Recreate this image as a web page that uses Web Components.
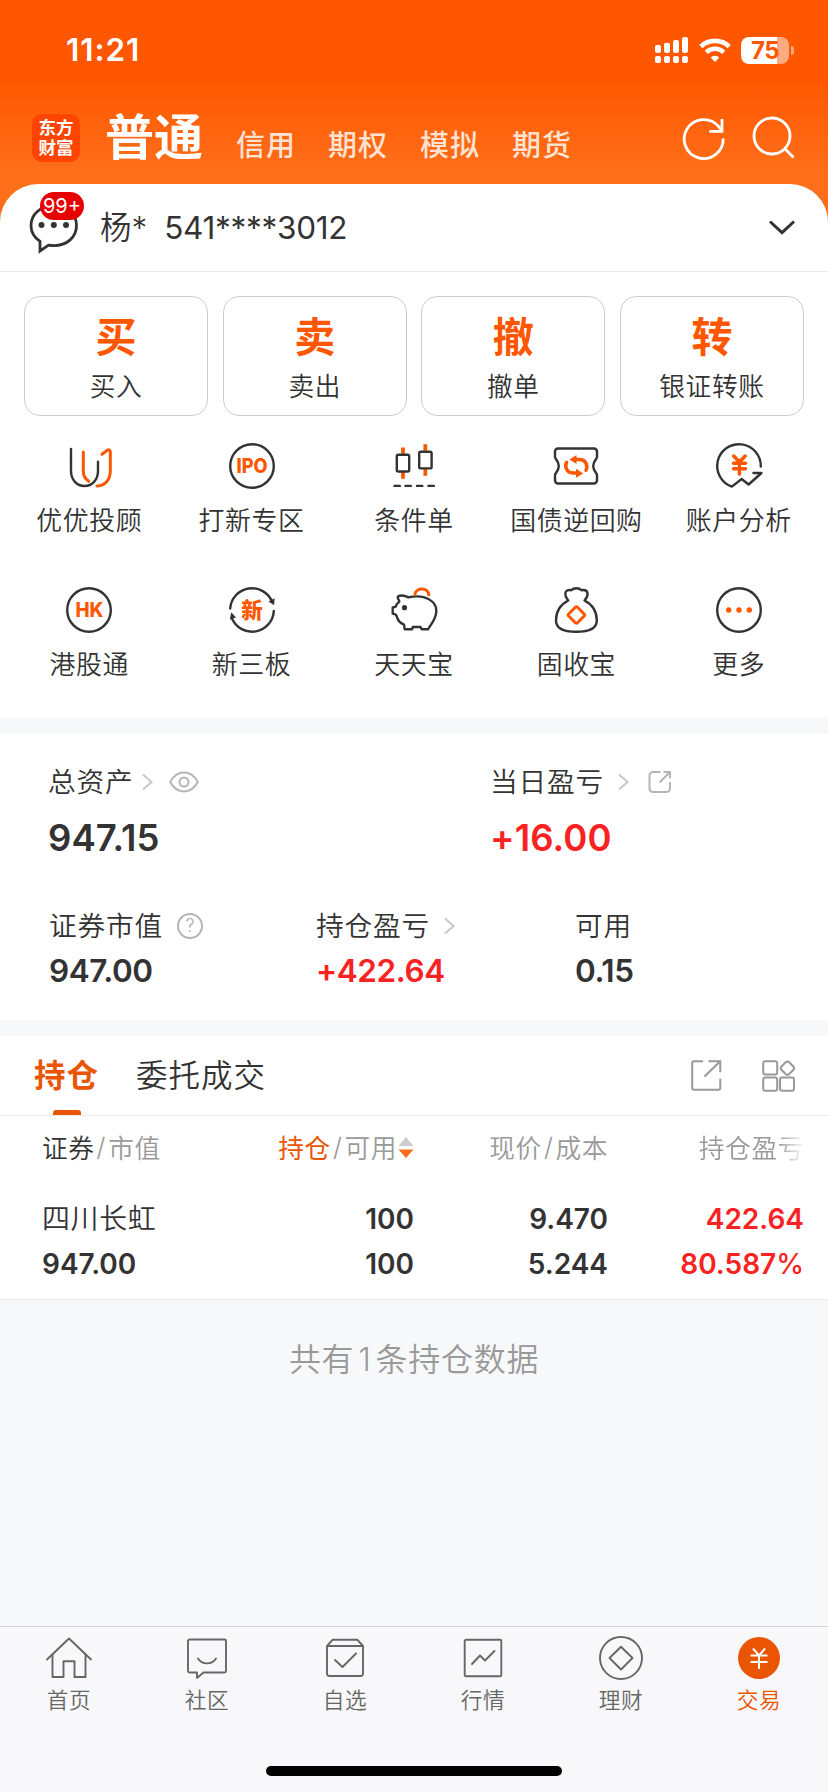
<!DOCTYPE html>
<html lang="zh-CN">
<head>
<meta charset="utf-8">
<meta name="viewport" content="width=device-width, initial-scale=1">
<title>交易</title>
<style>
  :root {
    --orange: #ff5600;
    --deep-orange: #ea5504;
    --text: #333;
    --muted: #999;
    --red: #f92222;
    --page: #f7f8fa;
    --thin: 350;
  }
  body {
    margin: 0;
    background: var(--page);
    color: var(--text);
    font-family: Inter, "Noto Sans CJK SC", sans-serif;
  }
  .note {
    margin: 0;
  }
  .note span {
    margin: 0 4px;
  }
</style>
</head>
<body>
<trade-app>
  <status-bar slot="top" time="11:21" battery="75"></status-bar>
  <trade-nav slot="top">
    <span slot="active">普通</span>
    <span>信用</span><span>期权</span><span>模拟</span><span>期货</span>
  </trade-nav>

  <account-row badge="99+"><span>杨*</span><span slot="no">541****3012</span></account-row>

  <trade-actions>
    <trade-button mark="买">买入</trade-button>
    <trade-button mark="卖">卖出</trade-button>
    <trade-button mark="撤">撤单</trade-button>
    <trade-button mark="转">银证转账</trade-button>
  </trade-actions>

  <shortcut-grid>
    <shortcut-item icon="advisor">优优投顾</shortcut-item>
    <shortcut-item icon="ipo">打新专区</shortcut-item>
    <shortcut-item icon="candles">条件单</shortcut-item>
    <shortcut-item icon="ticket">国债逆回购</shortcut-item>
    <shortcut-item icon="analysis">账户分析</shortcut-item>
    <shortcut-item icon="hk">港股通</shortcut-item>
    <shortcut-item icon="newboard">新三板</shortcut-item>
    <shortcut-item icon="piggy">天天宝</shortcut-item>
    <shortcut-item icon="bag">固收宝</shortcut-item>
    <shortcut-item icon="more">更多</shortcut-item>
  </shortcut-grid>

  <asset-panel>
    <asset-stat slot="main" big value="947.15">总资产
      <ui-icon slot="extra" name="chevron" style="margin-left:9px"></ui-icon>
      <ui-icon slot="extra" name="eye" style="margin-left:16px"></ui-icon>
    </asset-stat>
    <asset-stat slot="main" big up value="+16.00">当日盈亏
      <ui-icon slot="extra" name="chevron" style="margin-left:14px"></ui-icon>
      <ui-icon slot="extra" name="share" style="margin-left:19px"></ui-icon>
    </asset-stat>
    <asset-stat value="947.00">证券市值
      <ui-icon slot="extra" name="help" style="margin-left:14px"></ui-icon>
    </asset-stat>
    <asset-stat up value="+422.64">持仓盈亏
      <ui-icon slot="extra" name="chevron" style="margin-left:14px"></ui-icon>
    </asset-stat>
    <asset-stat value="0.15">可用</asset-stat>
  </asset-panel>

  <holding-tabs>
    <span slot="active">持仓</span>
    <span>委托成交</span>
  </holding-tabs>
  <holding-table></holding-table>
  <p slot="note" class="note">共有<span>1</span>条持仓数据</p>

  <tab-bar slot="bottom">
    <tab-item icon="home">首页</tab-item>
    <tab-item icon="community">社区</tab-item>
    <tab-item icon="watchlist">自选</tab-item>
    <tab-item icon="market">行情</tab-item>
    <tab-item icon="wealth">理财</tab-item>
    <tab-item icon="trade" active>交易</tab-item>
  </tab-bar>
</trade-app>

<script>
// each icon: [width, height, markup]
const ICONS = {
  signal: [33, 26, `<g fill="#fff"><rect y="8" width="6" height="8" rx="2"/><rect x="9" y="5.7" width="6" height="10.3" rx="2"/><rect x="18" y="3" width="6" height="13" rx="2"/><rect x="27" width="6" height="16" rx="2"/><rect y="19" width="6" height="7" rx="2"/><rect x="9" y="19" width="6" height="7" rx="2"/><rect x="18" y="19" width="6" height="7" rx="2"/><rect x="27" y="19" width="6" height="7" rx="2"/></g>`],
  wifi: [32, 24, `<g fill="none" stroke="#fff" stroke-width="4.6"><path d="M1.8 8.6a20.5 20.5 0 0 1 28.4 0"/><path d="M7.3 14.3a12.6 12.6 0 0 1 17.4 0"/></g><path d="M16 24l-4.3-4.4a6.2 6.2 0 0 1 8.6 0z" fill="#fff"/>`],
  refresh: [44, 44, `<g fill="none" stroke="#fff" stroke-width="2.8"><path d="M42.2 22.5A19.5 19.5 0 1 1 37.6 10.5L40.5 14"/><path d="M41 3v12.3H28.3"/></g>`],
  search: [44, 44, `<g fill="none" stroke="#fff" stroke-width="2.8"><circle cx="20" cy="20" r="18"/><path d="M32.6 32.6L41.6 41.6"/></g>`],
  down: [28, 18, `<path d="M2 2.5l12 11.2 12-11.2" fill="none" stroke="#333" stroke-width="3"/>`],
  message: [50, 52, `<path d="M25 3.5C12 3.5 2 12 2 23.5c0 6.8 3.5 12.2 9 15.8V49l8.5-5.8c1.7.3 3.6.5 5.5.5C38 43.7 47.5 35 47.5 23.5S38 3.5 25 3.5z" fill="none" stroke="#333" stroke-width="2.8"/><g fill="#333"><circle cx="12.5" cy="23" r="3"/><circle cx="24.8" cy="23" r="3"/><circle cx="37" cy="23" r="3"/></g>`],

  advisor: [48, 48, `<path class="d" d="M6 7v22c0 9 6 15 13.5 15S33 38 33 29v-9.3"/><path class="o" d="M18.3 10v19c0 5 1.9 8 5.4 10.3M37 12.3l5.3-4c1.5-1 3-.3 3 1.4V29c0 9-5.3 14.7-13.3 15"/>`],
  ipo: [48, 48, `<circle class="d" cx="24" cy="24" r="21.8"/><text class="t" x="24" y="31" font-size="19.5" textLength="31" lengthAdjust="spacingAndGlyphs">IPO</text>`],
  candles: [48, 48, `<path class="o wick" d="M13 5.5V12M13 30v6.7M35.3 2.2v6.5M35.3 27v6.7"/><rect class="d" x="6.8" y="12.8" width="12.4" height="16.7" rx="1.5"/><rect class="d" x="29.2" y="9.7" width="12.4" height="16.7" rx="1.5"/><path class="d" d="M4.5 43.9h5.3M15.5 43.9h5.3M27 43.9h5.3M38.5 43.9h5.3"/>`],
  ticket: [48, 48, `<path class="d" d="M6 6.500h36a3 3 0 0 1 3 3v5.500c0 2-3.800 4-3.800 9s3.800 7 3.800 9v5.500a3 3 0 0 1-3 3H6a3 3 0 0 1-3-3V33c0-2 3.800-4 3.800-9S3 17 3 15V9.500a3 3 0 0 1 3-3z"/><path class="o bold" d="M14.600 20.300c-2.300 5 .4 10.700 6.400 10.700h5M34 28.300c2.300-5-.4-10.700-6.400-10.700H24"/><path fill="#ff5600" d="M24.500 13v9l-7-4.600zM24 26.800v9l7.200-4.400z"/>`],
  analysis: [48, 48, `<path class="d" d="M45.8 24.5A21.8 21.8 0 1 0 16.8 44.6L26.7 37l6.9 5.500L46.500 31h-8"/><path class="o bold" d="M18.7 14l5.7 6 5.8-6M24.4 20v12M18.5 21.2h12M18.5 26.7h12"/>`],
  hk: [48, 48, `<circle class="d" cx="24" cy="24" r="21.8"/><text class="t" x="24.5" y="31" font-size="19.5" textLength="28" lengthAdjust="spacingAndGlyphs">HK</text>`],
  newboard: [48, 48, `<path class="d" d="M2.2 22.5A21.8 21.8 0 0 1 44.2 16M45.8 25A21.8 21.8 0 0 1 4 32.5"/><path fill="#333" d="M40.5 15.5l5.600 3.800.5-7zM1.800 33.500l1.500-7.200 4.700 5.200z"/><text class="t" x="24" y="31.5" font-size="21.5">新</text>`],
  piggy: [48, 48, `<path class="d" d="M9.3 15.700C9.600 14 6.700 12.500 8 10.300c3-1.300 7.300-.5 10.500 1 4-.8 9.500-1.500 15-.2C41 13 46.300 18 46.300 25c0 8-4.800 12.500-8.300 18.300h-6.300L30.500 41h-7.700L22 43.300h-7.300L14 38.500C10.500 37 8.500 35.500 7.500 32.500 7 30.500 6.500 29 5.300 28.300L2.700 27.500v-6l3-.8c.5-2 1.800-3.500 3.600-5z"/><path class="o" d="M25 8c1.500-6.500 13-6.800 13.800.8"/><circle cx="14.5" cy="21.7" r="2.6" fill="#333"/>`],
  bag: [48, 48, `<path class="d" d="M16.300 14.500C8.500 18.500 4 25.500 4 34.500c0 8 7 11.300 20.200 11.300S44.800 42.500 44.800 34.500c0-9-4.500-16-12.300-20 1.600-2 3.500-3.800 3-7.300-.5-3.200-3.200-3.400-6-3C28 2.600 26.500 2.200 24.400 2.200s-3.900.6-5.100 2c-2.800-.4-5.600-.2-6 3-.4 3.500 1.500 5.300 3 7.300z"/><rect class="o" x="18.2" y="22.8" width="12.4" height="12.4" rx="1.5" transform="rotate(45 24.4 29)"/>`],
  more: [48, 48, `<circle class="d" cx="24" cy="24" r="21.8"/><g fill="#ff5600"><circle cx="13.7" cy="24" r="2.7"/><circle cx="24" cy="24" r="2.7"/><circle cx="34.3" cy="24" r="2.7"/></g>`],

  chevron: [11, 18, `<path d="M1 1.5L9.500 9 1 16.500" fill="none" stroke="#c8c8c8" stroke-width="2"/>`],
  eye: [30, 22, `<g fill="none" stroke="#b5b5b5" stroke-width="2"><path d="M1.2 11C8-1.6 22-1.6 28.8 11 22 23.6 8 23.6 1.2 11z"/><circle cx="15" cy="11" r="4.5"/></g>`],
  share: [24, 24, `<path d="M12.5 2H5a3.500 3.500 0 0 0-3.500 3.500v13A3.500 3.500 0 0 0 5 22h13.500a3.500 3.500 0 0 0 3.500-3.500V12M15.500 2H22v6.500M22 2L11.500 12.500" fill="none" stroke="#b5b5b5" stroke-width="2"/>`],
  help: [26, 26, `<circle cx="13" cy="13" r="12" fill="none" stroke="#b5b5b5" stroke-width="2"/><text x="13.3" y="19.3" font-size="18" fill="#aaa" text-anchor="middle">?</text>`],
  export: [31, 31, `<path d="M12 1.200H3A1.800 1.800 0 0 0 1.200 3v25A1.800 1.800 0 0 0 3 29.800h24.500a1.800 1.800 0 0 0 1.800-1.800V18.500M17.500 1.200h11.800v11M29.300 1.200L13.500 16.500" fill="none" stroke="#999" stroke-width="2"/>`],
  grid: [34, 32, `<g fill="none" stroke="#999" stroke-width="2"><rect x="1.2" y="1.2" width="14" height="13.3" rx="2.2"/><rect x="1.2" y="17.5" width="14" height="13.3" rx="2.2"/><rect x="18" y="17.5" width="14" height="13.3" rx="2.2"/><rect x="20" y="2.8" width="10.8" height="10.8" rx="2.5" transform="rotate(45 25.4 8.2)"/></g>`],
  sort: [16, 22, `<path d="M8 0l7.500 9H.5z" fill="#ccc"/><path d="M8 21L.5 12.500h15z" fill="#ff6a1c"/>`],

  home: [46, 46, `<g class="g"><path d="M1 24.500L23 3.500l22 21"/><path d="M6.500 19.500V42h11V26.200h11V42h11V19.500"/></g>`],
  community: [46, 46, `<path class="g" d="M5.500 4.500h35a1.500 1.500 0 0 1 1.500 1.500v30a1.500 1.500 0 0 1-1.500 1.500H19.500L13 43v-5.500H5.500A1.500 1.500 0 0 1 4 36V6a1.500 1.500 0 0 1 1.500-1.500zM14 23.500c4 6.500 14 6.500 18 0"/>`],
  watchlist: [46, 46, `<path class="g" d="M5 11h36v27.500a2.500 2.500 0 0 1-2.500 2.500h-31A2.500 2.500 0 0 1 5 38.500zM5 11l5.500-6.200h25L41 11M13 25l7.500 7L34 18.500"/>`],
  market: [46, 46, `<path class="g" d="M6 4.700h34a1.300 1.300 0 0 1 1.300 1.300v34a1.300 1.300 0 0 1-1.300 1.300H6A1.300 1.300 0 0 1 4.700 40V6A1.300 1.300 0 0 1 6 4.700zM12 29l8-8.500 5 5L34.500 16"/>`],
  wealth: [46, 46, `<circle class="g" cx="23" cy="23" r="21"/><path class="g" d="M23 11.800L34.500 23 23 34.500 11.500 23z"/>`],
  trade: [46, 46, `<circle cx="23" cy="23" r="21" fill="#ea5504"/><path d="M17 13.500l6 7 6-7M23 20.500v13.500M14.500 20.500h17M14.500 27h17" fill="none" stroke="#fff" stroke-width="2"/>`]
};

const define = (name, css, html) => {
  customElements.define(name, class extends HTMLElement {
    constructor() {
      super();
      this.attachShadow({ mode: "open" });
      const markup = typeof html === "function" ? html(this) : html;
      this.shadowRoot.innerHTML = `<style>${css}</style>${markup}`;
    }
  });
};

class UiIcon extends HTMLElement {
  constructor() {
    super();
    this.attachShadow({ mode: "open" });
  }

  static get observedAttributes() {
    return ["name"];
  }

  attributeChangedCallback() {
    const [w, h, markup] = ICONS[this.getAttribute("name")];
    this.shadowRoot.innerHTML = `
      <style>
        :host { display: inline-flex; flex: none; }
        svg { display: block; overflow: visible; }
        .d, .o, .g { fill: none; stroke-linecap: round; stroke-linejoin: round; }
        .d { stroke: #333; stroke-width: 2.4px; }
        .o { stroke: #ff5600; stroke-width: 3px; }
        .g { stroke: #666; stroke-width: 1.9px; }
        .bold { stroke-width: 3.5px; }
        .wick { stroke-width: 3.7px; stroke-linecap: butt; }
        .t {
          fill: #ff5600;
          font-weight: 800;
          font-family: Inter, "Noto Sans CJK SC", sans-serif;
          text-anchor: middle;
        }
      </style>
      <svg width="${w}" height="${h}" viewBox="0 0 ${w} ${h}">${markup}</svg>`;
  }
}
customElements.define("ui-icon", UiIcon);

define("trade-app", `
  :host { display: flex; flex-direction: column; width: 828px; height: 1792px; background: var(--page); }
  .top {
    height: 240px;
    margin-bottom: -56px;
    background: linear-gradient(#ff5600 0, #ff5600 75px, #ff6e19 170px, #ff6e19 100%);
  }
  .sheet { background: #fff; border-radius: 38px 38px 0 0; }
  .note {
    flex: 1;
    padding-top: 36px;
    text-align: center;
    font-size: 32px;
    font-weight: var(--thin);
    line-height: 48px;
    letter-spacing: .7px;
    color: var(--muted);
  }
`, `
  <div class="top"><slot name="top"></slot></div>
  <div class="sheet"><slot></slot></div>
  <div class="note"><slot name="note"></slot></div>
  <slot name="bottom"></slot>
`);

define("status-bar", `
  :host { display: flex; align-items: center; height: 100px; padding: 0 34px 0 66px; color: #fff; }
  .time { flex: 1; font-size: 31.5px; font-weight: 600; line-height: 40px; letter-spacing: .9px; }
  .battery {
    display: flex;
    align-items: center;
    justify-content: center;
    width: 48px;
    height: 27px;
    margin-left: 10px;
    border-radius: 8px;
    background: linear-gradient(90deg, #fff 36px, rgba(255,255,255,.5) 36px);
    color: var(--orange);
    font-size: 24px;
    font-weight: 700;
    line-height: 27px;
    letter-spacing: -.5px;
  }
  .cap { width: 3px; height: 9px; margin-left: 2px; border-radius: 0 4px 4px 0; background: rgba(255,255,255,.5); }
`, el => `
  <span class="time">${el.getAttribute("time")}</span>
  <ui-icon name="signal"></ui-icon>
  <ui-icon name="wifi" style="margin-left:11px"></ui-icon>
  <span class="battery">${el.getAttribute("battery")}</span><span class="cap"></span>
`);

define("trade-nav", `
  :host { display: flex; align-items: center; height: 76px; padding: 0 32px; color: #fff; }
  .logo {
    display: flex;
    flex-direction: column;
    align-items: center;
    justify-content: center;
    width: 48px;
    height: 48px;
    border-radius: 10px;
    background: #ff4300;
    font-size: 17.5px;
    font-weight: 700;
    line-height: 20px;
  }
  .active { margin-left: 25px; font-size: 49px; font-weight: 700; line-height: 60px; }
  .rest {
    display: flex;
    flex: 1;
    gap: 32px;
    margin-left: 33px;
    padding-top: 16px;
    font-size: 29px;
    font-weight: 500;
    line-height: 40px;
    letter-spacing: 1px;
    color: rgba(255,255,255,.82);
  }
`, `
  <div class="logo"><span>东方</span><span>财富</span></div>
  <div class="active"><slot name="active"></slot></div>
  <div class="rest"><slot></slot></div>
  <ui-icon name="refresh"></ui-icon>
  <ui-icon name="search" style="margin-left:27px"></ui-icon>
`);

define("account-row", `
  :host {
    display: flex;
    align-items: center;
    box-sizing: border-box;
    height: 88px;
    padding: 0 32px 0 29px;
    border-bottom: 1px solid #ebebeb;
    font-size: 31.5px;
    line-height: 40px;
  }
  .msg { position: relative; display: flex; }
  .badge {
    position: absolute;
    left: 11px;
    top: -10px;
    width: 44px;
    height: 28px;
    border-radius: 14px;
    background: #e60000;
    color: #fff;
    font-size: 20px;
    line-height: 29px;
    text-align: center;
  }
  .name { margin-left: 21px; font-weight: var(--thin); }
  .no { flex: 1; margin-left: 17px; letter-spacing: -.3px; }
`, el => `
  <div class="msg"><ui-icon name="message"></ui-icon><span class="badge">${el.getAttribute("badge")}</span></div>
  <div class="name"><slot></slot></div>
  <div class="no"><slot name="no"></slot></div>
  <ui-icon name="down"></ui-icon>
`);

define("trade-actions", `
  :host { display: grid; grid-template-columns: repeat(4, 1fr); gap: 14.4px; padding: 24px 24px 0; }
`, `<slot></slot>`);

define("trade-button", `
  :host {
    display: flex;
    flex-direction: column;
    align-items: center;
    box-sizing: border-box;
    height: 120px;
    padding-top: 15px;
    border: 1px solid #ccc;
    border-radius: 16px;
  }
  .mark { font-size: 41px; font-weight: 700; line-height: 50px; color: var(--orange); }
  .label { margin-top: 7px; font-size: 25.7px; font-weight: var(--thin); line-height: 36px; letter-spacing: .6px; }
`, el => `
  <span class="mark">${el.getAttribute("mark")}</span>
  <span class="label"><slot></slot></span>
`);

define("shortcut-grid", `
  :host { display: grid; grid-template-columns: repeat(5, 1fr); grid-auto-rows: 144px; height: 276px; padding: 26px 8px 0; }
`, `<slot></slot>`);

define("shortcut-item", `
  :host { display: flex; flex-direction: column; align-items: center; }
  span { margin-top: 13px; font-size: 25.9px; font-weight: var(--thin); line-height: 36px; letter-spacing: .6px; white-space: nowrap; }
`, el => `
  <ui-icon name="${el.getAttribute("icon")}"></ui-icon>
  <span><slot></slot></span>
`);

define("asset-panel", `
  :host {
    display: block;
    box-sizing: border-box;
    height: 318px;
    border: solid var(--page);
    border-width: 16px 0;
  }
  .main, .sub { display: grid; padding: 0 48px; }
  .main { grid-template-columns: 442px 1fr; padding-top: 26px; }
  .sub { grid-template-columns: 267px 259px 1fr; padding: 44px 48px 0 49px; }
`, `
  <div class="main"><slot name="main"></slot></div>
  <div class="sub"><slot></slot></div>
`);

define("asset-stat", `
  :host { display: block; }
  .label {
    display: flex;
    align-items: center;
    height: 40px;
    font-size: 27.7px;
    font-weight: var(--thin);
    letter-spacing: .8px;
    white-space: nowrap;
  }
  ::slotted(ui-icon) { margin-top: 3px; }
  .value { margin-top: 7px; font-size: 31.5px; font-weight: 600; line-height: 40px; letter-spacing: -.4px; }
  :host([big]) .value { margin-top: 16px; font-size: 36.5px; line-height: 44px; letter-spacing: .1px; }
  :host([up]) .value { color: var(--red); }
`, el => `
  <div class="label"><slot></slot><slot name="extra"></slot></div>
  <div class="value">${el.getAttribute("value")}</div>
`);

define("holding-tabs", `
  :host {
    display: flex;
    align-items: center;
    box-sizing: border-box;
    height: 80px;
    padding: 0 32px 0 34px;
    border-bottom: 1px solid #ebebeb;
    font-size: 31.5px;
    line-height: 48px;
    letter-spacing: 1px;
  }
  .active { position: relative; font-weight: 700; color: var(--deep-orange); }
  .active::after {
    content: "";
    position: absolute;
    left: 19px;
    bottom: -15px;
    width: 28px;
    height: 5px;
    border-radius: 3px 3px 0 0;
    background: var(--deep-orange);
  }
  .rest { flex: 1; margin-left: 37px; font-weight: var(--thin); }
`, `
  <div class="active"><slot name="active"></slot></div>
  <div class="rest"><slot></slot></div>
  <ui-icon name="export"></ui-icon>
  <ui-icon name="grid" style="margin-left:40px"></ui-icon>
`);

define("holding-table", `
  :host { display: block; border-bottom: 1px solid #ebebeb; }
  .row {
    display: grid;
    grid-template-columns: 172px 200px 194px 1fr;
    padding: 0 24px 0 42px;
    text-align: right;
    white-space: nowrap;
  }
  .head { height: 60px; align-items: center; font-size: 25.7px; font-weight: var(--thin); letter-spacing: .6px; color: var(--muted); }
  .head > div { display: flex; align-items: center; justify-content: flex-end; }
  .head > :first-child { justify-content: flex-start; }
  .head ui-icon { margin: 4px 0 0 1px; }
  .head i { font-style: normal; margin: 0 2px; }
  b { font-weight: var(--thin); color: var(--text); }
  b.on { font-weight: 400; color: var(--deep-orange); }
  .fade { mask-image: linear-gradient(90deg, #000 74%, transparent 102%); }
  .body { box-sizing: border-box; height: 123px; padding-top: 21px; align-content: start; font-size: 28px; font-weight: 600; line-height: 45px; }
  .body > :nth-child(4n + 1) { text-align: left; }
  .name { font-size: 27.9px; font-weight: var(--thin); letter-spacing: .7px; }
  .up { color: var(--red); }
  .unit { font-weight: 500; }
`, `
  <div class="row head">
    <div><b>证券</b><i>/</i>市值</div>
    <div><b class="on">持仓</b><i>/</i>可用<ui-icon name="sort"></ui-icon></div>
    <div>现价<i>/</i>成本</div>
    <div><span class="fade">持仓盈亏</span></div>
  </div>
  <div class="row body">
    <span class="name">四川长虹</span><span>100</span><span>9.470</span><span class="up">422.64</span>
    <span>947.00</span><span>100</span><span>5.244</span><span class="up">80.587<span class="unit">%</span></span>
  </div>
`);

define("tab-bar", `
  :host { display: block; box-sizing: border-box; height: 166px; border-top: 1px solid #d3d3d6; background: #f8f8fb; }
  nav { display: grid; grid-template-columns: repeat(6, 1fr); height: 139px; }
  .home { width: 296px; height: 10px; margin: 0 auto; border-radius: 5px; background: #000; }
`, `<nav><slot></slot></nav><div class="home"></div>`);

define("tab-item", `
  :host { display: flex; flex-direction: column; align-items: center; padding-top: 8px; color: #666; }
  :host([active]) { color: var(--deep-orange); }
  span { margin-top: 4px; font-size: 21.7px; font-weight: var(--thin); line-height: 30px; letter-spacing: .5px; }
`, el => `
  <ui-icon name="${el.getAttribute("icon")}"></ui-icon>
  <span><slot></slot></span>
`);
</script>
</body>
</html>
